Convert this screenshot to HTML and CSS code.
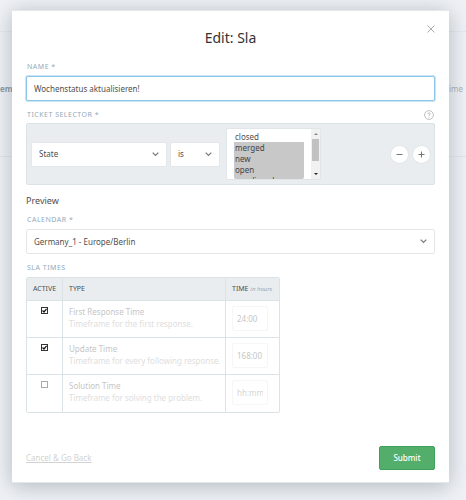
FILE: index.html
```
<!DOCTYPE html>
<html lang="en">
<head>
    <meta charset="UTF-8">
    <meta name="viewport" content="width=device-width, initial-scale=1.0">
    <title>Edit: Sla</title>
    <link rel="stylesheet" href="styles.css">
</head>
<body>

    <div class="page">
        <div class="page-header"></div>
        <div class="page-content">
            <span class="page-system">em</span>
            <span>ime</span>
        </div>
    </div>

    <form class="modal" role="dialog" aria-labelledby="modal-title">
        <button type="button" class="modal-close" aria-label="Close">
            <svg width="8" height="8" viewBox="0 0 8 8"><path d="M0.5 0.5L7.5 7.5M7.5 0.5L0.5 7.5" /></svg>
        </button>
        <h1 id="modal-title">Edit: Sla</h1>

        <div class="form-group">
            <label for="name">Name *</label>
            <input type="text" id="name" class="form-control active" value="Wochenstatus aktualisieren!">
        </div>

        <div class="form-group">
            <div class="label-row">
                <label for="attribute">Ticket Selector *</label>
                <button type="button" class="help" aria-label="Help">
                    <svg width="10" height="10" viewBox="0 0 10 10">
                        <circle cx="5" cy="5" r="4.4" />
                        <path d="M3.8 4C3.8 2.5 6.3 2.5 6.3 3.9C6.3 4.8 5 4.8 5 5.9M5 6.7V7.5" />
                    </svg>
                </button>
            </div>
            <div class="selector">
                <select id="attribute" class="form-control select-attribute">
                    <option>State</option>
                </select>
                <select class="form-control select-operator" aria-label="Operator">
                    <option>is</option>
                </select>
                <div class="list-box">
                    <select class="select-values" multiple aria-label="Values">
                        <option>closed</option>
                        <option selected>merged</option>
                        <option selected>new</option>
                        <option selected>open</option>
                        <option selected>pending close</option>
                        <option>pending reminder</option>
                        <option>removed</option>
                    </select>
                    <div class="scrollbar">
                        <svg width="4" height="2" viewBox="0 0 4 2"><path class="arrow-up" d="M0 2L2 0L4 2Z" /></svg>
                        <div class="scrollbar-thumb"></div>
                        <svg width="4" height="2" viewBox="0 0 4 2"><path class="arrow-down" d="M0 0L2 2L4 0Z" /></svg>
                    </div>
                </div>
                <div class="selector-controls">
                    <button type="button" aria-label="Remove">
                        <svg width="7" height="7" viewBox="0 0 7 7"><path d="M0.5 3.5H6.5" /></svg>
                    </button>
                    <button type="button" aria-label="Add">
                        <svg width="7" height="7" viewBox="0 0 7 7"><path d="M0.5 3.5H6.5M3.5 0.5V6.5" /></svg>
                    </button>
                </div>
            </div>
        </div>

        <h2>Preview</h2>

        <div class="form-group">
            <label for="calendar">Calendar *</label>
            <select id="calendar" class="form-control">
                <option>Germany_1 - Europe/Berlin</option>
            </select>
        </div>

        <div class="form-group">
            <h3>SLA Times</h3>
            <table class="sla-times">
                <thead>
                    <tr>
                        <th class="col-active">Active</th>
                        <th class="col-type">Type</th>
                        <th class="col-time">Time <span>in hours</span></th>
                    </tr>
                </thead>
                <tbody>
                    <tr>
                        <td class="col-active"><input type="checkbox" id="first-response" checked></td>
                        <td><label for="first-response">First Response Time</label><p>Timeframe for the first response.</p></td>
                        <td><input type="text" class="time" value="24:00" aria-label="First Response Time in hours"></td>
                    </tr>
                    <tr>
                        <td class="col-active"><input type="checkbox" id="update" checked></td>
                        <td><label for="update">Update Time</label><p>Timeframe for every following response.</p></td>
                        <td><input type="text" class="time" value="168:00" aria-label="Update Time in hours"></td>
                    </tr>
                    <tr>
                        <td class="col-active"><input type="checkbox" id="solution"></td>
                        <td><label for="solution">Solution Time</label><p>Timeframe for solving the problem.</p></td>
                        <td><input type="text" class="time" placeholder="hh:mm" aria-label="Solution Time in hours"></td>
                    </tr>
                </tbody>
            </table>
        </div>

        <div class="modal-footer">
            <a href="#">Cancel &amp; Go Back</a>
            <button type="submit" class="submit">Submit</button>
        </div>
    </form>

</body>
</html>
```
FILE: styles.css
```
* {
    box-sizing: border-box;
}

body {
    margin: 0;
    min-height: 100vh;
    background-color: #eff1f5;
    color: #4f4f4f;
    font-family: "Noto Sans", sans-serif;
    font-size: 8px;
    line-height: 12px;
}

button,
input,
select {
    font: inherit;
    color: inherit;
}

button {
    display: flex;
    align-items: center;
    justify-content: center;
    border: 0;
    padding: 0;
    background: none;
}

svg {
    fill: none;
    stroke: currentColor;
}

/* page behind the dialog */
.page-header {
    height: 32px;
    border-bottom: 1px solid #e6e9ed;
}

.page-content {
    display: flex;
    justify-content: space-between;
    height: 125px;
    padding: 51px 3px 0 0;
    border-bottom: 1px solid #e2e6ea;
    color: #adb0b3;
}

.page-system {
    color: #8d99a5;
    font-weight: bold;
}

/* dialog */
.modal {
    position: absolute;
    top: 10px;
    left: 12px;
    right: 17px;
    padding: 18px 14px 12px;
    background-color: #fff;
    border: 1px solid #e4e8ea;
    border-width: 1px 0;
    box-shadow: 0 3px 20px rgba(70, 95, 105, 0.38);
}

.modal-close {
    position: absolute;
    top: 14px;
    right: 14px;
    color: #aaa;
}

h1 {
    margin: 0 0 14px;
    font-size: 14px;
    line-height: 18px;
    font-weight: normal;
    text-align: center;
    color: #333;
}

h2 {
    margin: 9px 0 6px;
    font-size: 9px;
    line-height: 14px;
    font-weight: normal;
}

.form-group {
    margin-bottom: 8px;
}

.form-group > label,
.label-row label,
h3 {
    display: block;
    margin: 0;
    padding: 0 1px 3px;
    font-size: 7px;
    line-height: 12px;
    font-weight: normal;
    letter-spacing: 0.5px;
    text-transform: uppercase;
    color: #93aabb;
}

.label-row {
    display: flex;
    justify-content: space-between;
    align-items: flex-start;
}

.label-row label {
    padding-bottom: 2px;
}

.help {
    width: 12px;
    height: 12px;
    color: #b0b0b0;
}

.help svg {
    stroke-width: 0.8;
}

.form-control {
    display: block;
    width: 100%;
    height: 25px;
    padding: 0 7px;
    border: 1px solid #e3e7e9;
    border-radius: 2px;
    background-color: #fff;
    outline: none;
}

.form-control.active {
    border-color: #8cc6e8;
    box-shadow: 0 0 0 1px #c8e4f5;
}

select.form-control {
    appearance: none;
    background-image: url("data:image/svg+xml,%3Csvg xmlns='http://www.w3.org/2000/svg' width='7' height='5' viewBox='0 0 7 5'%3E%3Cpath d='M0.7 0.7L3.5 3.5L6.3 0.7' fill='none' stroke='%23777' stroke-width='1.2'/%3E%3C/svg%3E");
    background-repeat: no-repeat;
    background-position: right 7px center;
}

.selector {
    display: flex;
    align-items: center;
    padding: 4px;
    border: 1px solid #dce3e6;
    border-radius: 2px;
    background-color: #e9edf0;
}

.selector .select-attribute {
    flex: 0 1 136px;
    margin-right: 3px;
}

.selector .select-operator {
    flex: 0 0 50px;
    margin-right: 6px;
}

.list-box {
    display: flex;
    flex: 0 0 95px;
    height: 52px;
    border: 1px solid #e0e5e8;
    border-radius: 2px;
    background-color: #fff;
}

.select-values {
    flex: 1;
    min-width: 0;
    height: 48px;
    margin: 2px 7px 0;
    padding: 0;
    border: 0;
    background-color: #fff;
    outline: none;
}

.select-values option {
    min-height: 11px;
    padding: 0 1px;
    line-height: 11px;
}

.select-values option:checked {
    background-color: #c8c8c8;
    color: #444;
}

.scrollbar {
    display: flex;
    flex-direction: column;
    align-items: center;
    width: 9px;
    padding: 4px 0;
    background-color: #f1f1f1;
}

.scrollbar-thumb {
    width: 7px;
    height: 22px;
    margin: 4px 0 auto;
    background-color: #c1c1c1;
}

.scrollbar svg {
    stroke: none;
}

.arrow-up {
    fill: #888;
}

.arrow-down {
    fill: #222;
}

.selector-controls {
    display: flex;
    gap: 5px;
    margin-left: auto;
}

.selector-controls button {
    width: 17px;
    height: 17px;
    border-radius: 50%;
    background-color: #fff;
    box-shadow: 0 0 0 1px #e1e6e8;
    color: #777;
}

/* sla table */
.sla-times {
    width: 254px;
    table-layout: fixed;
    border-collapse: separate;
    border-spacing: 0;
    border: 1px solid #dce3e6;
    border-radius: 2px;
}

.sla-times th {
    height: 23px;
    padding: 0 6px;
    border-bottom: 1px solid #dce3e6;
    background-color: #e9edf0;
    font-size: 7px;
    font-weight: normal;
    text-align: left;
    text-transform: uppercase;
    white-space: nowrap;
}

.sla-times th span {
    font-size: 6px;
    font-style: italic;
    text-transform: none;
    color: #93aabb;
}

.sla-times td {
    height: 37px;
    padding: 5px 6px;
    border-bottom: 1px solid #dce3e6;
    vertical-align: top;
    color: #c6c6c6;
    white-space: nowrap;
}

.sla-times tr > * + * {
    border-left: 1px solid #dce3e6;
}

.sla-times tbody tr:last-child td {
    border-bottom: 0;
}

.sla-times .col-active {
    width: 35px;
    padding-left: 0;
    padding-right: 0;
    text-align: center;
}

.sla-times .col-time {
    width: 54px;
}

.sla-times p {
    margin: 0;
    color: #dedede;
}

.sla-times input[type="checkbox"] {
    appearance: none;
    display: block;
    width: 7px;
    height: 7px;
    margin: 1px auto;
    border: 1px solid #aaa;
    background-color: #fff;
}

.sla-times input[type="checkbox"]:checked {
    border-color: #333;
    background-image: url("data:image/svg+xml,%3Csvg xmlns='http://www.w3.org/2000/svg' width='5' height='5' viewBox='0 0 5 5'%3E%3Cpath d='M0.5 2.5L2 4L4.6 0.8' fill='none' stroke='%23111' stroke-width='1.2'/%3E%3C/svg%3E");
}

.time {
    display: block;
    width: 36px;
    height: 25px;
    padding: 0 4px;
    border: 1px solid #f6f6f6;
    border-radius: 2px;
    background-color: #fff;
}

.time::placeholder {
    color: #d6d6d6;
}

.modal-footer {
    display: flex;
    align-items: center;
    justify-content: space-between;
    margin-top: 33px;
}

.modal-footer a {
    color: #d2d2d2;
}

.submit {
    width: 56px;
    height: 24px;
    border: 1px solid #3fa05b;
    border-radius: 2px;
    background-color: #54ae6b;
    color: #fff;
    font-weight: 500;
}
```
